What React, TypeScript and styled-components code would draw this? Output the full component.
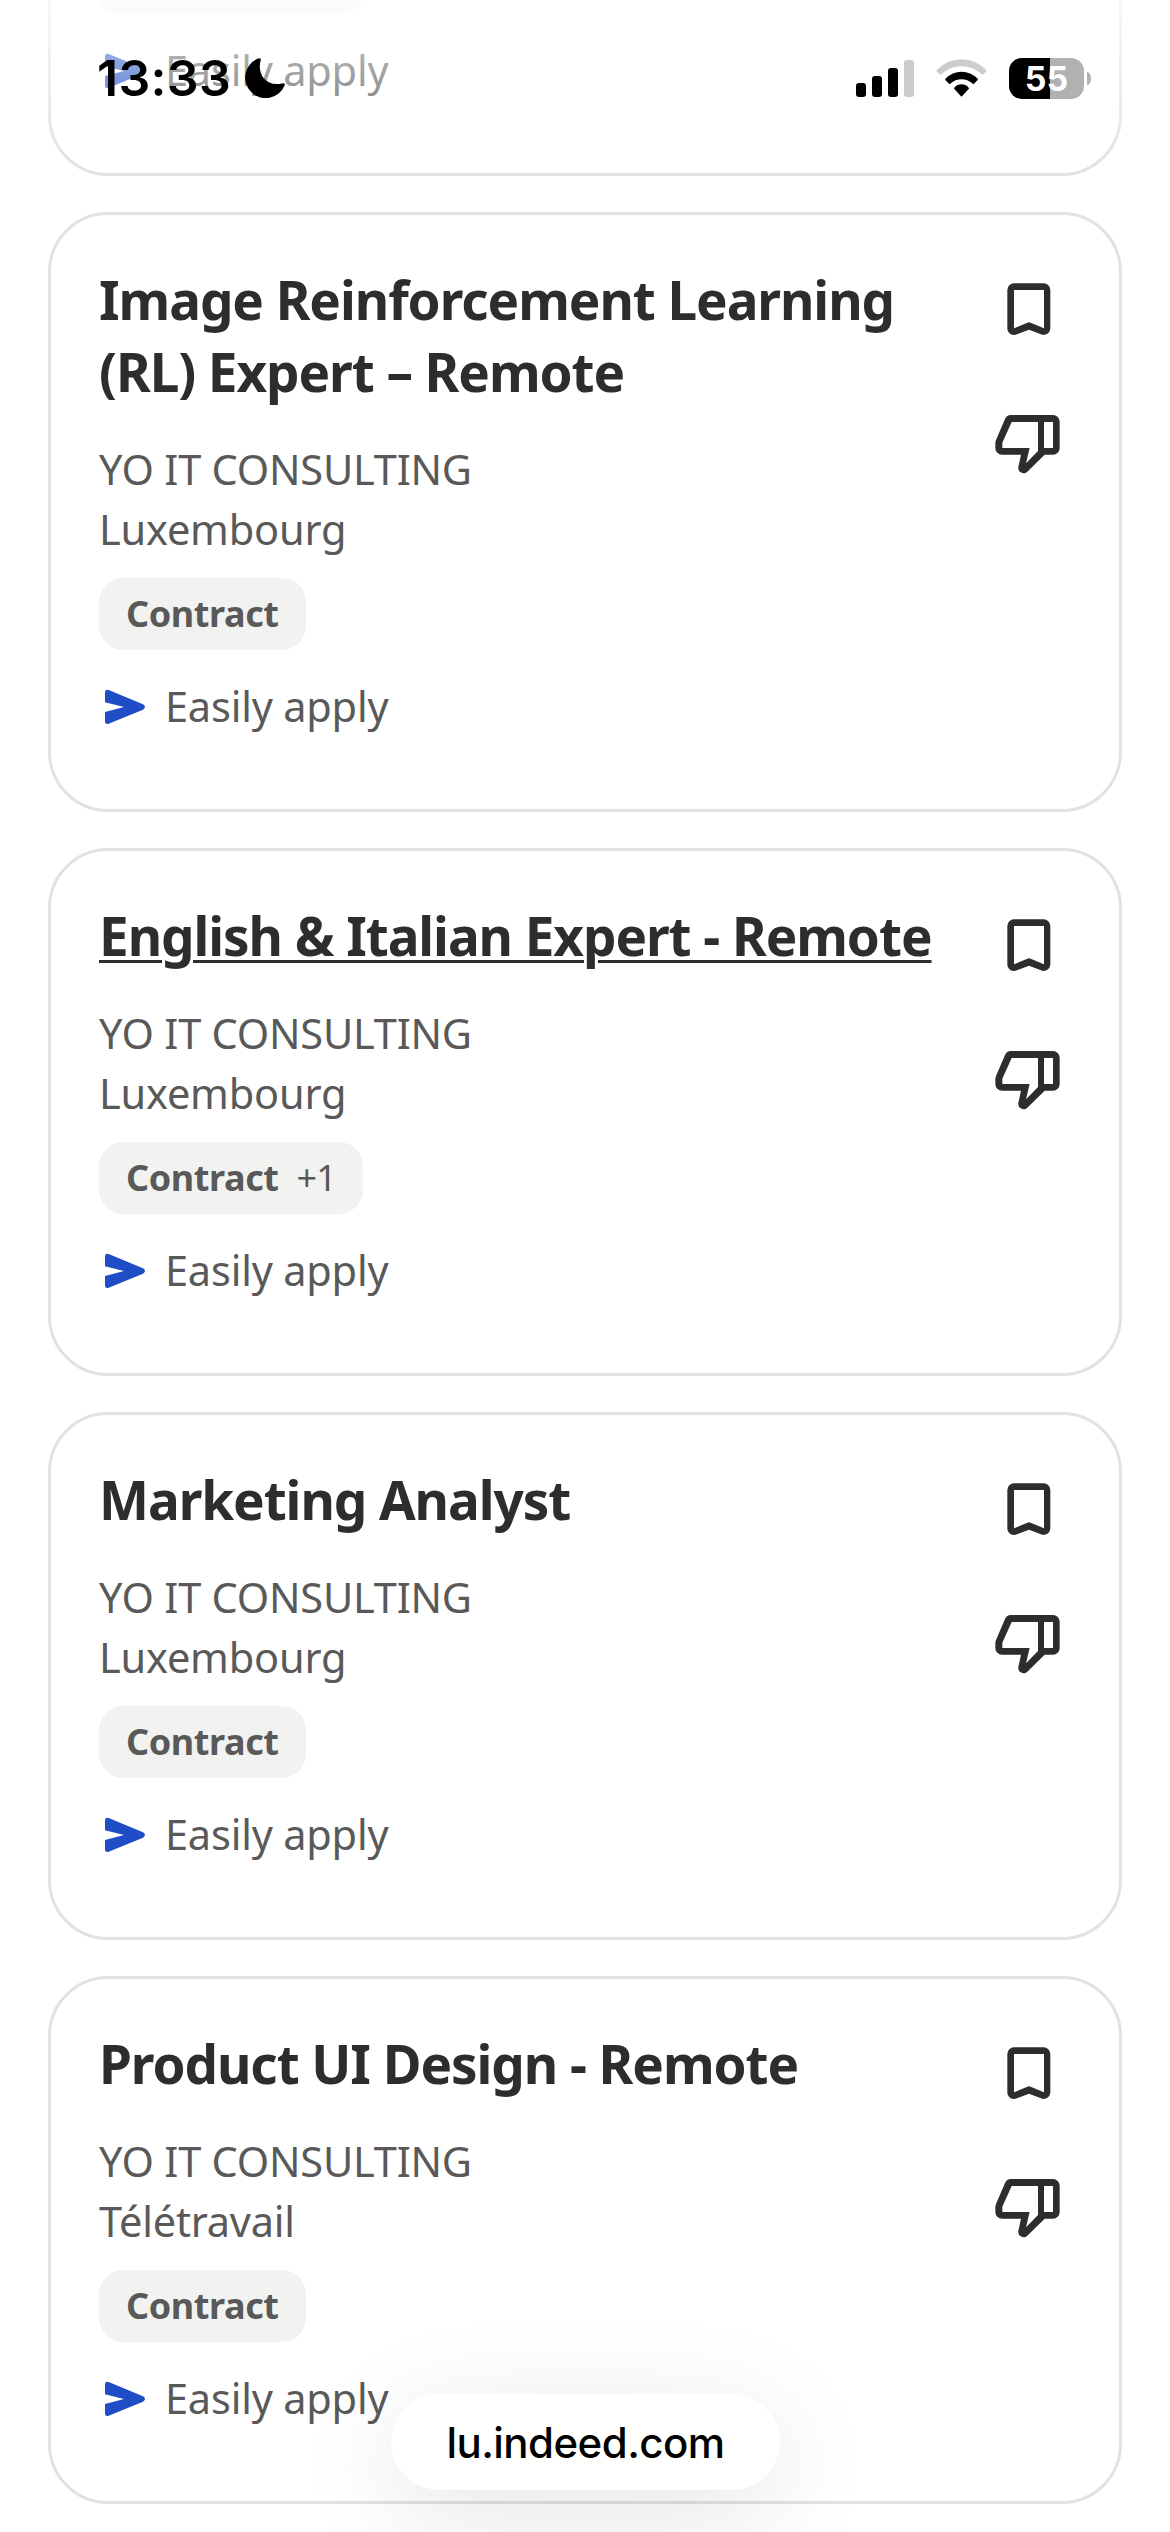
import React from "react";
import styled, { createGlobalStyle } from "styled-components";

const GlobalStyle = createGlobalStyle`
  * { box-sizing: border-box; }
  html, body { margin: 0; padding: 0; background: #fff; }
  body { overflow: hidden; -webkit-font-smoothing: antialiased; }
`;

const jobFont = `"Noto Sans", "Open Sans", sans-serif`;
const systemFont = `Inter, Roboto, sans-serif`;

const Screen = styled.main`
  position: relative;
  width: 1170px;
  height: 2532px;
  overflow: hidden;
  background: #fff;
  font-family: ${jobFont};
`;

const JobList = styled.div`
  display: flex;
  flex-direction: column;
  gap: 36px;
  padding: 0 48px;
`;

const Card = styled.article`
  display: flex;
  justify-content: space-between;
  padding: 48px 54px 73px 48px;
  border: 3px solid #e2e2e1;
  border-radius: 60px;
`;

const ScrolledCard = styled.article`
  display: flex;
  flex-direction: column;
  align-items: flex-start;
  height: 176px;
  padding: 0 48px;
  border: 3px solid #e2e2e1;
  border-top: 0;
  border-radius: 0 0 60px 60px;
`;

const TagEdge = styled.div`
  width: 263px;
  height: 14px;
  border-radius: 0 0 24px 24px / 0 0 14px 14px;
  background: #f2f2f0;
`;

const Details = styled.div`
  display: flex;
  flex-direction: column;
  align-items: flex-start;
`;

const Title = styled.h2<{ $active?: boolean }>`
  margin: 0;
  padding: 1px 0 31px;
  font-size: 53px;
  font-weight: 700;
  line-height: 72px;
  letter-spacing: -1.05px;
  color: #2d2d2d;
  white-space: pre;
  text-decoration: ${(p) => (p.$active ? "underline 3px" : "none")};
  text-underline-offset: 4px;
`;

const Meta = styled.div`
  font-size: 41.5px;
  font-weight: 400;
  line-height: 60px;
  letter-spacing: -0.2px;
  color: #595959;
`;

const Tag = styled.div`
  display: flex;
  align-items: center;
  gap: 18px;
  height: 72px;
  margin-top: 19px;
  padding: 0 27px 2px;
  border-radius: 24px;
  background: #f2f2f0;
  font-size: 36px;
  font-weight: 700;
  letter-spacing: -0.4px;
  color: #595959;
`;

const TagMore = styled.span`
  font-weight: 400;
  letter-spacing: -0.8px;
`;

const ApplyRow = styled.div`
  display: flex;
  align-items: center;
  gap: 18px;
  margin-top: 26px;
  font-size: 41.5px;
  font-weight: 400;
  line-height: 60px;
  letter-spacing: -0.2px;
  color: #595959;
`;

const ApplyIcon = styled.svg`
  width: 48px;
  height: 48px;
  margin-top: 2px;
  fill: #1f4dc5;
`;

const Actions = styled.div`
  display: flex;
  flex-direction: column;
  gap: 63px;
  padding-top: 10px;
`;

const ActionButton = styled.button`
  display: flex;
  padding: 0;
  border: 0;
  background: none;
`;

const ActionIcon = styled.svg`
  width: 72px;
  height: 72px;
  fill: #2d2d2d;
  fill-rule: evenodd;
`;

const StatusBar = styled.header`
  position: absolute;
  inset: 0 0 auto 0;
  display: flex;
  justify-content: space-between;
  align-items: flex-start;
  height: 176px;
  padding: 48px 79px 0 97px;
  background: linear-gradient(
    to bottom,
    rgba(255, 255, 255, 0.72) 0,
    rgba(255, 255, 255, 0.5) 60px,
    rgba(255, 255, 255, 0.34) 95px,
    rgba(255, 255, 255, 0.1) 141px,
    rgba(255, 255, 255, 0) 176px
  );
`;

const ClockGroup = styled.div`
  display: flex;
  align-items: center;
  gap: 14px;
  height: 60px;
`;

const Clock = styled.time`
  font-family: ${systemFont};
  font-size: 50px;
  font-weight: 600;
  line-height: 60px;
  letter-spacing: 0.3px;
  color: #000;
`;

const StatusIcons = styled.div`
  display: flex;
  align-items: center;
  height: 60px;
`;

const Moon = styled.svg`
  width: 40px;
  height: 40px;
`;

const Signal = styled.svg`
  width: 58px;
  height: 37px;
  margin-right: 22px;
`;

const Wifi = styled.svg`
  width: 51px;
  height: 38px;
  margin-right: 22px;
`;

const Battery = styled.div`
  display: flex;
  align-items: center;
  justify-content: center;
  width: 75px;
  height: 41px;
  border-radius: 13px;
  background: linear-gradient(to right, #000 55%, #b1b1b1 55%);
  font-family: ${systemFont};
  font-size: 34px;
  font-weight: 700;
  line-height: 41px;
  color: #fff;
`;

const BatteryCap = styled.div`
  width: 4px;
  height: 13px;
  margin-left: 3px;
  border-radius: 0 4px 4px 0 / 0 7px 7px 0;
  background: #b1b1b1;
`;

const AddressPill = styled.div`
  position: absolute;
  top: 2394px;
  left: 391px;
  display: flex;
  align-items: center;
  justify-content: center;
  width: 389px;
  height: 96px;
  border-radius: 48px;
  background: #fffffd;
  box-shadow: 0 24px 110px rgba(0, 0, 0, 0.11);
  font-family: ${systemFont};
  font-size: 42px;
  font-weight: 500;
  letter-spacing: -0.55px;
  color: #000;
`;

interface Job {
  title: string;
  location: string;
  more?: string;
  active?: boolean;
}

const jobs: Job[] = [
  {
    title: "Image Reinforcement Learning\n(RL) Expert – Remote",
    location: "Luxembourg",
  },
  {
    title: "English & Italian Expert - Remote",
    location: "Luxembourg",
    more: "+1",
    active: true,
  },
  { title: "Marketing Analyst", location: "Luxembourg" },
  { title: "Product UI Design - Remote", location: "Télétravail" },
];

function EasilyApply() {
  return (
    <ApplyRow>
      <ApplyIcon viewBox="177 429 144 144">
        <path d="M195 457Q195 447 206 450L309 493Q321 501 309 509L206 551Q195 554 195 545V516L252 501L195 487Z" />
      </ApplyIcon>
      Easily apply
    </ApplyRow>
  );
}

function JobCard({ job }: { job: Job }) {
  return (
    <Card>
      <Details>
        <Title $active={job.active}>{job.title}</Title>
        <Meta>YO IT CONSULTING</Meta>
        <Meta>{job.location}</Meta>
        <Tag>
          Contract
          {job.more && <TagMore>{job.more}</TagMore>}
        </Tag>
        <EasilyApply />
      </Details>
      <Actions>
        <ActionButton aria-label="Save job">
          <ActionIcon viewBox="99 87 216 216">
            <path d="M162 118H251A20 20 0 0 1 271 138V253A20 20 0 0 1 243 271L207 257L171 271A20 20 0 0 1 142 253V138A20 20 0 0 1 162 118ZM162 138V253L202 236Q207 233 212 236L252 253V138Z" />
          </ActionIcon>
        </ActionButton>
        <ActionButton aria-label="Not interested">
          <ActionIcon viewBox="99 492 216 216">
            <path d="M153 513H279A20 20 0 0 1 299 533V612A20 20 0 0 1 279 632H254L202 683A16 16 0 0 1 175 669L183 632H126A20 20 0 0 1 106 612V598Q106 592 109 586L135 525A20 20 0 0 1 153 513ZM155 534L127 596V612H209L198 658L234 621V534ZM252 534V612H279V534Z" />
          </ActionIcon>
        </ActionButton>
      </Actions>
    </Card>
  );
}

export default function App() {
  return (
    <>
      <GlobalStyle />
      <Screen>
        <JobList>
          <ScrolledCard>
            <TagEdge />
            <EasilyApply />
          </ScrolledCard>
          {jobs.map((job) => (
            <JobCard key={job.title} job={job} />
          ))}
        </JobList>
        <StatusBar>
          <ClockGroup>
            <Clock>13:33</Clock>
            <Moon viewBox="0 0 40 40">
              <path d="M13 0.6Q16-0.8 15.8 2C12 14 19 29 37 25.5Q40.5 24.6 39.6 27.5A20.5 20.5 0 1 1 13 0.6Z" />
            </Moon>
          </ClockGroup>
          <StatusIcons>
            <Signal viewBox="0 0 58 37">
              <rect x="0" y="23" width="10" height="14" rx="3" />
              <rect x="16" y="16" width="10" height="21" rx="3" />
              <rect x="32" y="8" width="10" height="29" rx="3" />
              <rect x="48" y="0" width="10" height="37" rx="3" fill="#ccc" />
            </Signal>
            <Wifi viewBox="409 176 151 114">
              <path
                fill="#ccc"
                d="M410 209Q443 177 484.500 177T559 209Q560 211 559 213L550 222Q548 224 545 222Q519 198 484.500 198T424 222Q421 224 419 222L410 213Q409 211 410 209Z"
              />
              <path d="M436 235Q457 214 484.500 214T533 235Q534 237 533 239L522 250Q520 252 518 250Q503 237 484.500 237T451 250Q449 252 447 250L436 239Q435 237 436 235Z" />
              <path d="M463 262Q472 252 484.500 252T506 262Q508 264 506 266L484.500 289L463 266Q461 264 463 262Z" />
            </Wifi>
            <Battery>55</Battery>
            <BatteryCap />
          </StatusIcons>
        </StatusBar>
        <AddressPill>lu.indeed.com</AddressPill>
      </Screen>
    </>
  );
}
